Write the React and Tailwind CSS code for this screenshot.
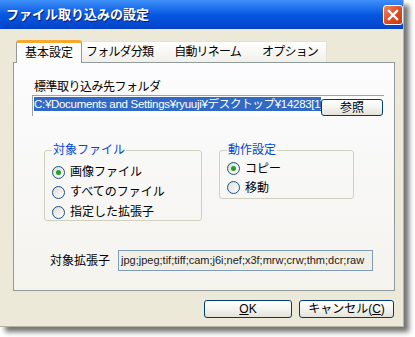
import React from 'react';

const font = { fontFamily: '"Liberation Sans", "Noto Sans CJK JP", sans-serif' };

function Radio({ checked, label, tall }) {
  return (
    <div className={`flex items-center ${tall ? 'h-[20px]' : 'h-[19px]'}`}>
      <span className="w-[13px] h-[13px] rounded-full border border-[#1c5180] bg-gradient-to-br from-[#dcdcd6] to-white flex items-center justify-center">
        {checked && <span className="w-[5px] h-[5px] rounded-full bg-[#21a121]" />}
      </span>
      <span className="ml-[5px] text-[12px] text-black whitespace-nowrap">{label}</span>
    </div>
  );
}

function Group({ title, className, children }) {
  return (
    <fieldset className={`border border-[#d0d0bf] rounded-[3px] px-[6px] ${className}`}>
      <legend className="px-[1px] text-[12px] leading-[13px] text-[#0046d5]">{title}</legend>
      {children}
    </fieldset>
  );
}

function XpButton({ children, className }) {
  return (
    <button type="button" className={`border border-[#003c74] rounded-[3px] bg-gradient-to-b from-white via-[#f4f4f0] to-[#e3e2da] text-[12px] text-black flex items-center justify-center shrink-0 ${className}`}>
      {children}
    </button>
  );
}

export default function App() {
  return (
    <div className="w-[415px] h-[337px] bg-white" style={font}>
      <div className="w-[404px] h-[327px] bg-[#ece9d8] flex flex-col shadow-[5px_5px_5px_rgba(0,0,0,0.55)] border-r border-b border-[#b8b4a4]">
        {/* title bar */}
        <div className="h-[29px] flex items-center justify-between pl-[6px] bg-gradient-to-b from-[#3d8ff8] via-[#0758e3] to-[#0343c8]">
          <span className="text-white font-bold text-[13px] [text-shadow:1px_1px_0_#0a1f6a]">ファイル取り込みの設定</span>
          <div className="w-[20px] h-[20px] rounded-[3px] border border-white bg-gradient-to-br from-[#f08a64] via-[#e04b22] to-[#c73a12] flex items-center justify-center">
            <svg width="12" height="12" viewBox="0 0 12 12">
              <path d="M2 2 L10 10 M10 2 L2 10" stroke="white" strokeWidth="2.4" strokeLinecap="square" />
            </svg>
          </div>
        </div>

        {/* tabs */}
        <div className="flex items-end mt-[10px] ml-[16px] h-[23px]">
          <div className="h-[23px] w-[66px] shrink-0 bg-white border-l border-r border-[#919b9c] border-t-[3px] border-t-[#f7a82d] rounded-t-[3px] flex items-center justify-center text-[12px] relative top-[1px] z-10">
            基本設定
          </div>
          <div className="h-[21px] w-[245px] shrink-0 bg-gradient-to-b from-white to-[#f0efe9] border-t border-r border-[#e3e1d8] flex items-center text-[12px] tracking-[-0.8px] whitespace-nowrap">
            <span className="ml-[4px] shrink-0">フォルダ分類</span>
            <span className="ml-[21px] shrink-0">自動リネーム</span>
            <span className="ml-[21px] shrink-0">オプション</span>
          </div>
        </div>

        {/* panel */}
        <div className="ml-[13px] w-[382px] h-[229px] border border-[#919b9c] bg-gradient-to-b from-[#fcfcfe] to-[#f4f3ee] flex flex-col">
          <div className="ml-[20px] mt-[17px] text-[12px] leading-[14px] tracking-[-0.5px]">標準取り込み先フォルダ</div>
          <div className="ml-[18px] mt-[1px] w-[352px] h-[21px] border-t border-l border-[#a0a0a0] bg-white flex items-start pt-[1px] pl-[1px]">
            <div className="w-[287px] h-[14px] bg-[#316ac5] text-white text-[11.5px] leading-[14px] tracking-[-0.3px] overflow-hidden whitespace-nowrap">C:¥Documents and Settings¥ryuuji¥デスクトップ¥14283[1]</div>
            <XpButton className="w-[62px] h-[17px] mt-[2px]">参照</XpButton>
          </div>

          <div className="flex mt-[28px] ml-[30px] items-start">
            <Group title="対象ファイル" className="w-[158px] h-[77px] pt-[5px] pl-[7px]">
              <Radio tall checked label="画像ファイル" />
              <Radio tall label="すべてのファイル" />
              <Radio tall label="指定した拡張子" />
            </Group>
            <Group title="動作設定" className="w-[135px] h-[55px] ml-[17px] pt-[2px] pl-[7px]">
              <Radio checked label="コピー" />
              <Radio label="移動" />
            </Group>
          </div>

          <div className="flex items-center mt-[29px] ml-[36px]">
            <span className="text-[12px]">対象拡張子</span>
            <div className="ml-[8px] w-[255px] h-[21px] border border-[#7f9db9] bg-[#f1efe6] flex items-center pl-[2px] text-[11px] text-[#222] whitespace-nowrap overflow-hidden">
              jpg;jpeg;tif;tiff;cam;j6i;nef;x3f;mrw;crw;thm;dcr;raw
            </div>
          </div>
        </div>

        {/* buttons */}
        <div className="flex justify-end gap-[7px] mt-[9px] mr-[9px]">
          <XpButton className="w-[88px] h-[18px]"><span className="underline">O</span>K</XpButton>
          <XpButton className="w-[95px] h-[18px]">キャンセル(<span className="underline">C</span>)</XpButton>
        </div>
      </div>
    </div>
  );
}
